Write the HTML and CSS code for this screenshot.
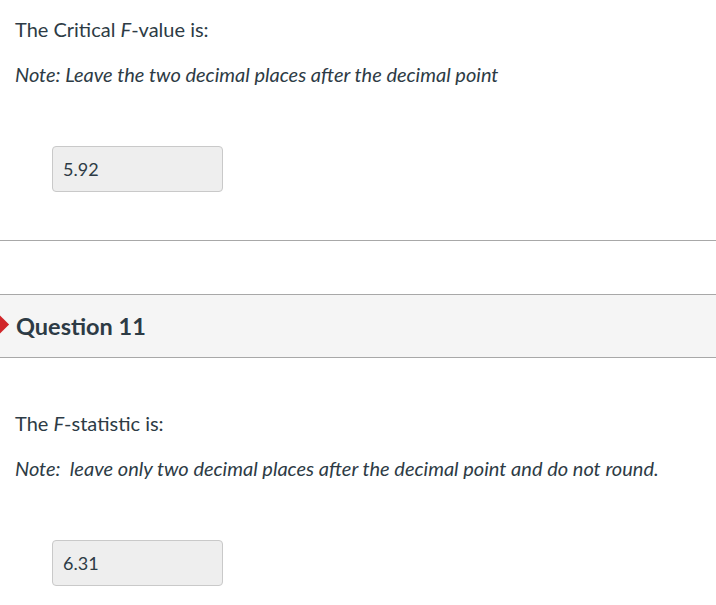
FILE: index.html
```html
<!DOCTYPE html>
<html>
<head>
<meta charset="utf-8">
<link rel="stylesheet" href="styles.css">
</head>
<body>
  <div class="question first">
    <p class="q-text">The Critical <em>F</em>-value is:</p>
    <p class="note"><em>Note: Leave the two decimal places after the decimal point</em></p>
    <div class="answer"><div class="box">5.92</div></div>
  </div>
  <hr class="divider">
  <div class="q-header">
    <span class="flag"></span>
    <h2 class="q-title">Question 11</h2>
  </div>
  <div class="question second">
    <p class="q-text">The <em>F</em>-statistic is:</p>
    <p class="note"><em>Note:&nbsp; leave only two decimal places after the decimal point and do not round.</em></p>
    <div class="answer"><div class="box">6.31</div></div>
  </div>
</body>
</html>
```

FILE: styles.css
```css
html, body {
  margin: 0;
  padding: 0;
  background: #ffffff;
}
body {
  font-family: Lato, "Open Sans", sans-serif;
  color: #2d3b45;
  width: 716px;
  overflow: hidden;
}
.question {
  padding: 0 15px;
}
.question.first {
  padding-top: 14px;
}
.q-text, .note {
  margin: 0;
  font-size: 20px;
  line-height: 30px;
}
.note {
  margin-top: 15px;
}
.answer {
  margin-top: 57px;
  padding-left: 37px;
}
.box {
  width: 149px;
  height: 44px;
  border: 1px solid #c9c9c9;
  border-radius: 4px;
  background: #eeeeee;
  padding: 0 10px;
  font-size: 18px;
  line-height: 44px;
}
.divider {
  margin: 48px 0 0;
  border: 0;
  border-top: 1px solid #a8a8a8;
  height: 0;
}
.q-header {
  margin-top: 53px;
  height: 62px;
  border-top: 1px solid #a8a8a8;
  border-bottom: 1px solid #a8a8a8;
  background: #f5f5f5;
  display: flex;
  align-items: center;
  position: relative;
  overflow: hidden;
}
.flag {
  position: absolute;
  left: -9px;
  top: 22px;
  width: 15px;
  height: 15px;
  background: #d1262a;
  transform: rotate(45deg);
}
.q-title {
  margin: 0 0 0 16px;
  font-size: 23.5px;
  font-weight: 700;
  line-height: 30px;
}
.question.second {
  padding-top: 50px;
}
```
